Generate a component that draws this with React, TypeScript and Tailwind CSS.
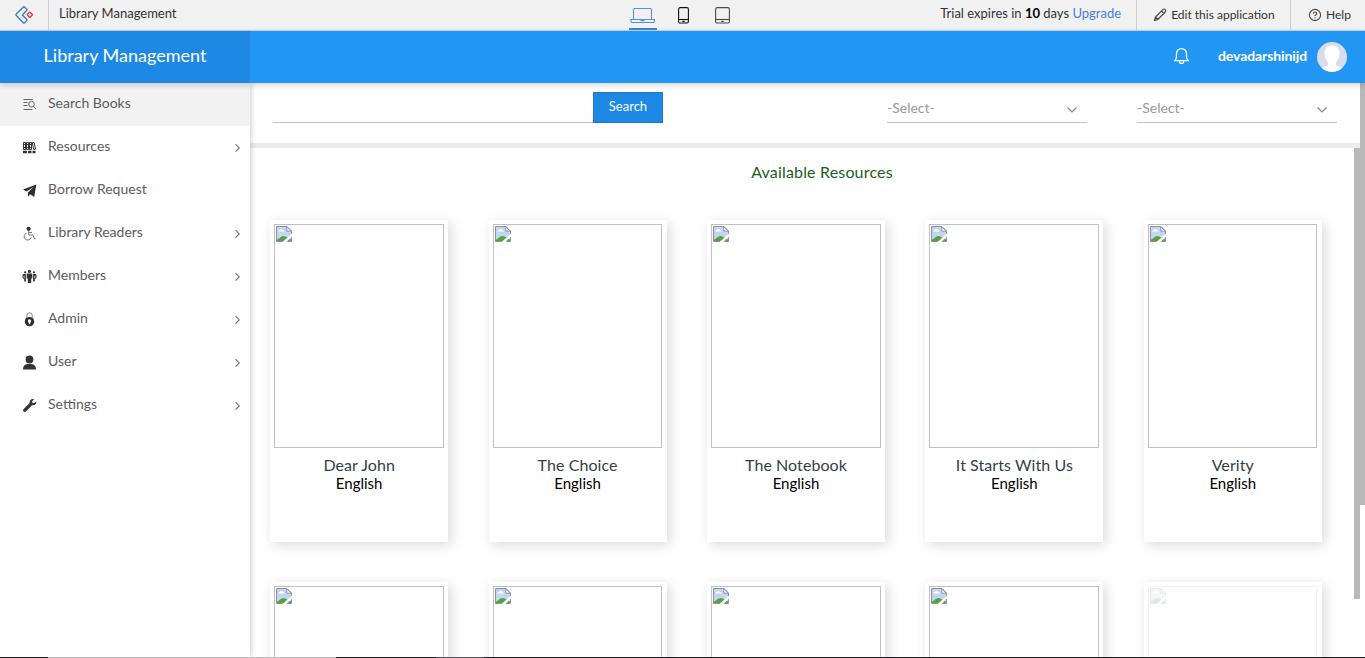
import type { ReactNode } from "react";

type Book = { title: string; language: string };

const firstRow: Book[] = [
  { title: "Dear John", language: "English" },
  { title: "The Choice", language: "English" },
  { title: "The Notebook", language: "English" },
  { title: "It Starts With Us", language: "English" },
  { title: "Verity", language: "English" },
];

const secondRow = [false, false, false, false, true];

function Logo() {
  return (
    <svg width="19" height="19" viewBox="0 0 19 19" fill="none" strokeWidth="1.4" strokeLinejoin="round">
      <path d="M8.2 1.2 1.3 8.1a1 1 0 0 0 0 1.5l6.9 7.1c.5.5 1 .5 1.5 0l1.9-1.9c.5-.5.5-1 0-1.5L7.4 8.9l4.2-4.3c.5-.5.5-1 0-1.5L9.7 1.2c-.5-.5-1-.5-1.500 0Z" stroke="#3f7fc1" />
      <rect x="12.8" y="6.8" width="4" height="4" rx="0.8" transform="rotate(45 14.800 8.800)" stroke="#e0393e" />
    </svg>
  );
}

function LaptopIcon() {
  return (
    <svg width="26" height="18" viewBox="0 0 26 18" fill="none" stroke="#5592dc" strokeWidth="1.1">
      <path d="M3.500 12V2.500a1 1 0 0 1 1-1h16a1 1 0 0 1 1 1V12M1 12.500h23.500v1.500a1.500 1.500 0 0 1-1.500 1.500H2.500A1.500 1.500 0 0 1 1 14Z" />
      <path d="M10.500 13.500h4" strokeWidth="1.500" />
    </svg>
  );
}

function DeviceIcon({ wide = false }: { wide?: boolean }) {
  const w = wide ? 14 : 10;
  return (
    <svg width={w + 1} height="17" viewBox={`0 0 ${w + 1} 17`} fill="none" stroke={wide ? "#4a4a4a" : "#111"} strokeWidth="1.100">
      <rect x="0.600" y="0.600" width={w - 0.2} height="15.400" rx="1.500" />
      <path d={`M.5 12.500h${w}`} />
      <path d={`M${w / 2 - 0.700} 14.400h2.400`} strokeWidth="1.300" />
    </svg>
  );
}

function SearchListIcon() {
  return (
    <svg width="15" height="15" viewBox="0 0 15 15" fill="none" stroke="#666" strokeWidth="1">
      <path d="M1.500 2.500h9M1.500 5.500h4M1.500 8.500h4M1.500 12.500h9" />
      <circle cx="9.500" cy="7.200" r="2.800" />
      <path d="m11.500 9.200 2.500 2.800" />
    </svg>
  );
}

function BooksIcon() {
  return (
    <svg width="15" height="15" viewBox="0 0 15 15" fill="none" stroke="#333" strokeWidth="1">
      <path d="M1.500 2.500h2v7h-2zM4.500 2.500h2v7h-2zM7.500 2.500h2v7h-2z" />
      <path d="m10.300 2.700 1.700-.3 1.500 6.700-1.800.4zM1.500 4.500h8M1.500 7.500h8" />
      <path d="M1 12h4M6 12h3.500M10.500 12h3" strokeWidth="2.600" />
    </svg>
  );
}

function PlaneIcon() {
  return (
    <svg width="15" height="15" viewBox="0 0 15 15" fill="#2e2e2e">
      <path d="M14.300 1.500 1 6.500 4.500 8.500 11.800 3.700 5.900 9.500 6 13.700 8.200 11.300l4 2.700Z" />
    </svg>
  );
}

function WheelchairIcon() {
  return (
    <svg width="15" height="15" viewBox="0 0 15 15" fill="none" stroke="#777" strokeWidth="1">
      <circle cx="6.600" cy="2.800" r="2.100" fill="#333" stroke="none" />
      <path d="M6.700 4.500v4.500h4l2 4 1-.4M6.700 6.500h3.300M4.500 7.200A3.500 3.500 0 1 0 9 11.500" />
    </svg>
  );
}

function MembersIcon() {
  return (
    <svg width="15" height="15" viewBox="0 0 15 15" fill="#333">
      <circle cx="7.500" cy="2.400" r="1.600" />
      <circle cx="3.100" cy="3.300" r="1.100" />
      <circle cx="11.900" cy="3.300" r="1.100" />
      <path d="M5.500 4.500h4c.5 0 .8.3.8.8v4.200H9.200V14H5.800V9.500H4.700V5.300c0-.5.300-.8.800-.8Z" />
      <path d="M2.300 5.100H3.900v7.300H2.200V10C.9 9.600.5 9 .5 8V6.500c0-.9.700-1.400 1.800-1.400ZM12.700 5.100H11.100v7.300h1.700V10c1.300-.4 1.700-1 1.700-2V6.500c0-.9-.7-1.400-1.800-1.400Z" />
      <path d="M2.100 6.700v2.500M12.900 6.700v2.500" stroke="#fff" strokeWidth=".8" />
    </svg>
  );
}

function LockIcon() {
  return (
    <svg width="15" height="15" viewBox="0 0 15 15" fill="none">
      <path d="M4.800 6.500V3.500a2.700 2.700 0 0 1 5.400 0v3" stroke="#888" />
      <circle cx="7.500" cy="9.600" r="4.700" fill="#2e2e2e" />
      <circle cx="7.500" cy="9" r="1.700" fill="#fff" />
      <path d="M7.500 9v3.200" stroke="#fff" strokeWidth="1.400" />
    </svg>
  );
}

function UserIcon() {
  return (
    <svg width="15" height="15" viewBox="0 0 15 15" fill="#333">
      <circle cx="7.500" cy="4.500" r="3.900" />
      <path d="M1 14.500c0-3.400 1.500-4.900 4-5.500h5c2.500.600 4 2.100 4 5.500Z" />
    </svg>
  );
}

function WrenchIcon() {
  return (
    <svg width="15" height="15" viewBox="0 0 15 15" fill="#333">
      <path d="M12.100 1.200 10 3.400l.3 1.400 1.500.4 2.600-1.700c.3 2.400-1.800 4.100-4.300 3.700l-5.900 6.100c-.7.700-1.700.8-2.500.1-.8-.8-.8-1.700 0-2.500L7.600 5C7.200 2.500 9.300.400 12.100 1.200Z" />
    </svg>
  );
}

function ChevronRight() {
  return (
    <svg width="7" height="10" viewBox="0 0 7 10" fill="none" stroke="#777" strokeWidth="1.200">
      <path d="m1.500 1.200 3.700 3.700-3.700 3.700" />
    </svg>
  );
}

type Item = { label: string; icon: ReactNode; active?: boolean; expandable?: boolean };

const menu: Item[] = [
  { label: "Search Books", icon: <SearchListIcon />, active: true },
  { label: "Resources", icon: <BooksIcon />, expandable: true },
  { label: "Borrow Request", icon: <PlaneIcon /> },
  { label: "Library Readers", icon: <WheelchairIcon />, expandable: true },
  { label: "Members", icon: <MembersIcon />, expandable: true },
  { label: "Admin", icon: <LockIcon />, expandable: true },
  { label: "User", icon: <UserIcon />, expandable: true },
  { label: "Settings", icon: <WrenchIcon />, expandable: true },
];

function BrokenImage({ faded = false }: { faded?: boolean }) {
  return (
    <div className={`ml-1 h-56 w-[169.600px] self-start border border-[#c0c0c0] p-px ${faded ? "opacity-20" : ""}`}>
      <svg width="16" height="16" viewBox="0 0 16 16">
        <path d="M.5.500h10.500l4.500 4.500v10.500H.5Z" fill="#c3d5f6" stroke="#8d9195" />
        <path d="M10.800.800v4.400h4.400Z" fill="#f5f7fa" stroke="#8d9195" strokeWidth=".9" />
        <path d="M2.500 5.500c0-1 .5-1.500 1.500-1.500C4.300 2.500 6.700 2.500 7 4c1 0 1.500.5 1.500 1.500Z" fill="#fff" />
        <path d="M1 15v-1.500c2.500-.5 3.500-3.500 6.500-3.500S12 12.500 15 13.500V15Z" fill="#56a33b" />
        <path d="M16 7.500v3L10.500 16H6.500Z" fill="#fff" />
      </svg>
    </div>
  );
}

function Card({ book, faded }: { book?: Book; faded?: boolean }) {
  return (
    <article className="flex h-[322px] w-[178px] shrink-0 flex-col items-center bg-white pt-1 shadow-[3px_3px_12px_rgba(0,0,0,0.15)]">
      <BrokenImage faded={faded} />
      {book && (
        <>
          <h3 className="mt-[7px] text-base leading-5 tracking-[0.070px] text-[#333f48]">{book.title}</h3>
          <p className="text-[15px] leading-4 text-black">{book.language}</p>
        </>
      )}
    </article>
  );
}

function Select() {
  return (
    <div className="flex h-[29px] w-[200px] items-center justify-between border-b border-[#bdbdbd] pr-[9px] text-[14px] text-[#999]">
      <span className="pb-0.5">-Select-</span>
      <svg className="mt-1" width="12" height="8" viewBox="0 0 12 8" fill="none" stroke="#888" strokeWidth="1.200">
        <path d="m1.500 1.500 4.500 4.500 4.500-4.500" />
      </svg>
    </div>
  );
}

export default function App() {
  return (
    <div className="relative flex h-[658px] w-[1365px] flex-col overflow-hidden bg-white font-['Lato',sans-serif]">
      <div className="flex h-[31px] shrink-0 border-b border-[#c4d3e2] bg-[#f1f1f1] text-[13px] text-[#333]">
        <div className="flex w-[49px] items-center border-r border-[#c9ced8] pl-[15px]">
          <Logo />
        </div>
        <div className="w-[580px] pl-2.5 leading-[27px]">Library Management</div>
        <div className="flex w-[28px] justify-center border-b-2 border-[#3f85cf] pt-[7px]">
          <LaptopIcon />
        </div>
        <div className="flex w-[284px] gap-[26px] pt-[7px] pl-[21px]">
          <DeviceIcon />
          <DeviceIcon wide />
        </div>
        <div className="flex w-[196px] gap-[3.300px] leading-[27px] whitespace-nowrap">
          <span>Trial expires in</span>
          <b className="font-bold text-black">10</b>
          <span>days</span>
          <span className="text-[#4a7fe0]">Upgrade</span>
        </div>
        <div className="flex w-[154px] items-center gap-1 border-l border-[#c9ced8] pl-4 text-xs whitespace-nowrap">
          <svg width="14" height="14" viewBox="0 0 14 14" fill="none" stroke="#444" strokeWidth="1.100">
            <path d="m1.500 12.500.9-3.500 7.400-7.400c.8-.8 1.700-.8 2.400 0 .8.700.8 1.600 0 2.400L4.900 11.500ZM8.500 3l2.500 2.500M2.400 9l2.500 2.500" />
          </svg>
          <span>Edit this application</span>
        </div>
        <div className="flex w-[75px] items-center gap-1 border-l border-[#c9ced8] pl-[17px] text-xs">
          <svg width="14" height="14" viewBox="0 0 14 14" fill="none" stroke="#444" strokeWidth="1.100">
            <circle cx="7" cy="7" r="5.600" />
            <path d="M5.300 5.700c0-2.400 3.500-2.200 3.500-.2 0 1.300-1.800 1.300-1.800 2.600M7 9.200v1.100" />
          </svg>
          <span>Help</span>
        </div>
      </div>

      <header className="z-20 flex h-[52px] shrink-0 bg-[#2196f3] text-white shadow-[0_2px_6px_rgba(0,0,0,0.18)]">
        <div className="w-[250px] bg-[#1e88e5] text-center text-lg leading-[48px]">Library Management</div>
        <div className="flex flex-1 items-center justify-end pr-[18px]">
          <svg className="mr-[28px] mb-0.5" width="17" height="18" viewBox="0 0 17 18" fill="none" stroke="#fff" strokeWidth="1.300">
            <path d="M1.500 13.700c1.500-1 2-2.400 2-4.200V6.600a5 5 0 0 1 10 0v2.900c0 1.800.5 3.200 2 4.200ZM6.200 14.200c.3 3 4.300 3 4.600 0" strokeLinejoin="round" />
          </svg>
          <span className="mr-[10px] pb-0.5 text-sm font-bold tracking-[-0.100px]">devadarshinijd</span>
          <svg width="30" height="30" viewBox="0 0 30 30">
            <clipPath id="avatar">
              <circle cx="15" cy="15" r="15" />
            </clipPath>
            <g clipPath="url(#avatar)">
              <path d="M0 0h30v30H0Z" fill="#d9dcea" />
              <path d="M15 3.500c5 0 7.500 3.500 7.500 8 0 4-1.500 7-3.500 8.500v3c1 1.500 5 2 8 4v3H3v-3c3-2 7-2.500 8-4v-3c-2-1.500-3.500-4.500-3.500-8.500 0-4.500 2.500-8 7.500-8Z" fill="#fff" />
            </g>
          </svg>
        </div>
      </header>

      <div className="flex min-h-0 flex-1">
        <nav className="z-10 w-[250px] shrink-0 bg-white shadow-[1px_0_6px_rgba(0,0,0,0.2)]">
          {menu.map((item) => (
            <div key={item.label} className={`flex h-[43px] items-center pr-[9px] pl-[21.500px] ${item.active ? "bg-[#f2f2f2]" : ""}`}>
              <span className="pb-[1px]">{item.icon}</span>
              <span className="ml-[11.500px] flex-1 pb-[3px] text-sm text-[#5c5c5c]">{item.label}</span>
              {item.expandable && <ChevronRight />}
            </div>
          ))}
        </nav>

        <main className="flex min-w-0 flex-1 flex-col">
          <div className="flex shrink-0">
            <div className="flex h-[65px] w-[1110px] border-b-[5px] border-[#ebebeb] pt-[9px] pl-[23px]">
              <div className="h-[31px] w-[320px] border-b border-[#bdbdbd]" />
              <button className="h-[31px] w-[70px] border border-[#1976d2] bg-[#1e88e5] pb-0.5 text-[13px] leading-none text-white">Search</button>
              <div className="flex gap-[50px] pt-[2px] pl-[224px]">
                <Select />
                <Select />
              </div>
            </div>
            <div className="w-[5px] bg-[#b9b9b9]" />
          </div>
          <div className="flex min-h-0 flex-1">
            <section className="flex w-[1104px] shrink-0 flex-col overflow-hidden">
              <h2 className="mt-3 ml-10 text-center text-base leading-6 tracking-[0.170px] text-[#1b5e20]">Available Resources</h2>
              <div className="mt-9 flex gap-[40.400px] pl-[20.200px]">
                {firstRow.map((book) => (
                  <Card key={book.title} book={book} />
                ))}
              </div>
              <div className="mt-10 flex gap-[40.400px] pl-[20.200px]">
                {secondRow.map((faded, i) => (
                  <Card key={i} faded={faded} />
                ))}
              </div>
            </section>
            <div className="h-[451px] w-1.5 bg-[#b9b9b9]" />
            <div className="h-[357px] w-[5px] bg-[#b9b9b9]" />
          </div>
        </main>
      </div>

      <div className="absolute bottom-0 left-0 z-30 flex h-px w-full bg-[#1f1f24]">
        <div className="ml-12 w-[288px] bg-[#b9b9b9]" />
        <div className="ml-[100px] w-12 bg-[#55555a]" />
      </div>
    </div>
  );
}
